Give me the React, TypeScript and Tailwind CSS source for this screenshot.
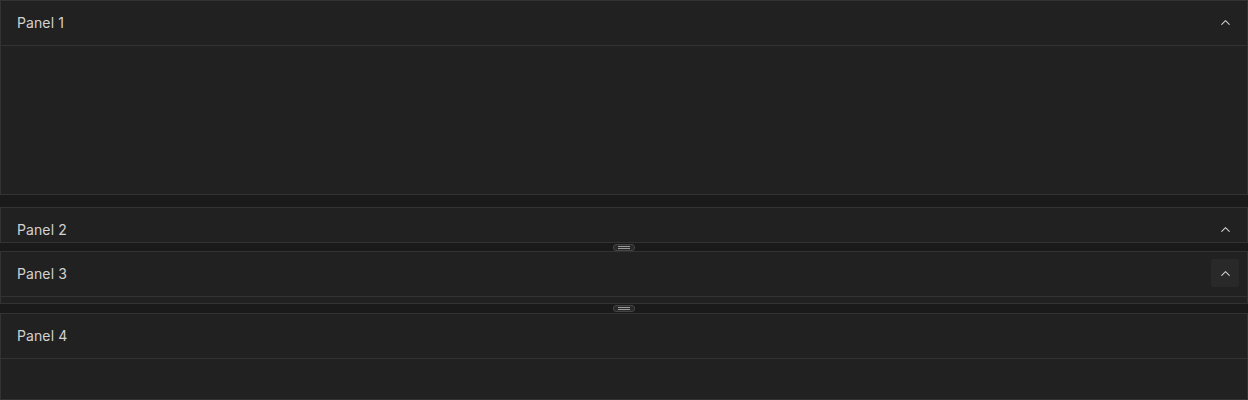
import { ChevronUp } from 'lucide-react';

function Header({ title, hovered = false, chevron = true }: { title: string; hovered?: boolean; chevron?: boolean }) {
  return (
    <div className="h-[45px] shrink-0 flex items-center justify-between pl-4 pr-2 border-b border-[#333333]">
      <span className="text-[14px] leading-none pb-px text-[#d2d2d2] tracking-[0.1px]">{title}</span>
      {chevron && (
        <div
          className={`w-7 h-7 mb-[2px] flex items-center justify-center rounded-[3px] ${
            hovered ? 'bg-[#292929]' : ''
          }`}
        >
          <ChevronUp size={15} strokeWidth={1.75} className="text-[#cfcfcf]" />
        </div>
      )}
    </div>
  );
}

function Panel({ title, height, hovered, chevron }: { title: string; height: string; hovered?: boolean; chevron?: boolean }) {
  return (
    <section className={`${height} shrink-0 flex flex-col overflow-hidden bg-[#212121] border border-[#333333]`}>
      <Header title={title} hovered={hovered} chevron={chevron} />
    </section>
  );
}

function Handle({ height }: { height: string }) {
  return (
    <div className={`${height} shrink-0 flex items-center justify-center bg-[#1a1a1a]`}>
      <div className="w-[22px] h-[7px] rounded-[3px] border border-[#444444] bg-[#2a2a2a] flex flex-col justify-center gap-[1px] px-[4px]">
        <div className="h-px bg-[#9a9a9a]" />
        <div className="h-px bg-[#9a9a9a]" />
      </div>
    </div>
  );
}

export default function App() {
  return (
    <div className="h-[400px] w-[1248px] overflow-hidden bg-[#1a1a1a] flex flex-col" style={{ fontFamily: 'Inter, "Noto Sans", sans-serif' }}>
      <Panel title="Panel 1" height="h-[195px]" />
      <div className="h-3 shrink-0" />
      <Panel title="Panel 2" height="h-[36px]" />
      <Handle height="h-[8px]" />
      <Panel title="Panel 3" height="h-[53px]" hovered />
      <Handle height="h-[9px]" />
      <Panel title="Panel 4" height="h-[87px]" chevron={false} />
    </div>
  );
}
